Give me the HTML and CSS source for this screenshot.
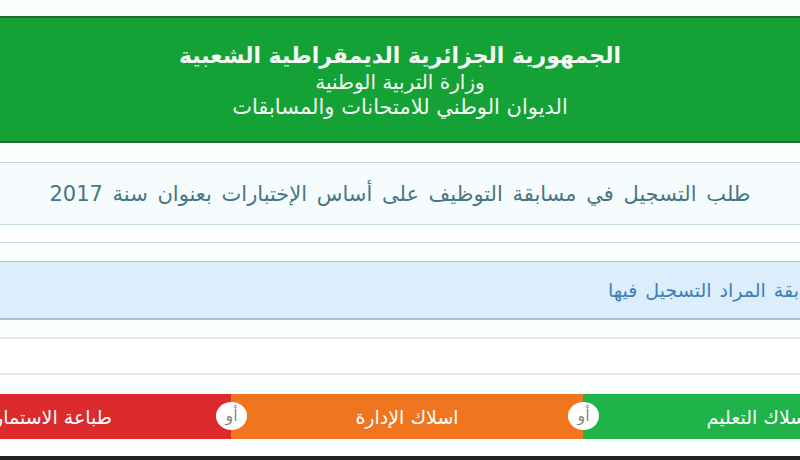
FILE: index.html
```html
<!DOCTYPE html>
<html lang="ar" dir="rtl">
<head>
  <meta charset="utf-8">
  <title>التسجيل في مسابقة التوظيف</title>
  <link rel="stylesheet" href="styles.css">
</head>
<body>
  <div class="page">
    <div class="banner">
      <h1>الجمهورية الجزائرية الديمقراطية الشعبية</h1>
      <p>وزارة التربية الوطنية</p>
      <p class="office">الديوان الوطني للامتحانات والمسابقات</p>
      <span class="dot">.</span>
    </div>

    <div class="panel-title">
      <h2>طلب التسجيل في مسابقة التوظيف على أساس الإختبارات بعنوان سنة 2017</h2>
    </div>
    <hr class="sep">

    <div class="notice">اختر المسابقة المراد التسجيل فيها</div>

    <div class="blank-row"></div>

    <div class="choices">
      <a class="choice choice-green" href="#">اسلاك التعليم</a>
      <a class="choice choice-orange" href="#"><span class="or">أو</span>اسلاك الإدارة</a>
      <a class="choice choice-red" href="#"><span class="or">أو</span>طباعة الاستمارة</a>
    </div>
  </div>
  <div class="footer-bar"></div>
</body>
</html>
```

FILE: styles.css
```css
html, body {
	margin: 0;
	padding: 0;
	overflow: hidden;
}
body {
	background-color: #fbfffe;
	font-family: "DejaVu Sans", sans-serif;
	height: 460px;
}
.page {
	width: 1070px;
	margin-right: -135px;
	padding-top: 16px;
}
.banner {
	background-color: #14a136;
	border-top: 2px solid #1d6b2c;
	border-bottom: 2px solid #1d6b2c;
	height: 123px;
	text-align: center;
	color: #f4fbf4;
}
.banner h1 {
	margin: 0;
	padding-top: 24px;
	font-size: 22px;
	line-height: 28px;
	font-weight: bold;
}
.banner p {
	margin: 0;
	font-size: 20px;
	line-height: 25px;
}
.banner .office {
	font-size: 21px;
}
.dot {
	display: block;
	font-size: 10px;
	line-height: 10px;
	color: #5a8a60;
}
.panel-title {
	margin-top: 19px;
	background-color: #f6fcfd;
	border-top: 1px solid #c6dcdf;
	border-bottom: 1px solid #c6dcdf;
	height: 61px;
	display: flex;
	align-items: center;
	justify-content: center;
}
.panel-title h2 {
	margin: 0;
	font-size: 21px;
	font-weight: normal;
	word-spacing: 3px;
	color: #467684;
}
.sep {
	margin: 17px 0 0;
	border: 0;
	border-top: 1px solid #c9dcdf;
	height: 0;
}
.notice {
	margin-top: 18px;
	background-color: #dceefb;
	border-top: 1px solid #adc3d5;
	border-bottom: 2px solid #a9c0d2;
	height: 56px;
	line-height: 56px;
	padding-right: 50px;
	font-size: 19px;
	word-spacing: 2px;
	color: #3e80b8;
}
.blank-row {
	margin-top: 17px;
	border-top: 2px solid #e5e5e5;
	border-bottom: 2px solid #e5e5e5;
	background-color: #fff;
	height: 34px;
}
.choices {
	margin-top: 19px;
	display: flex;
	height: 45px;
}
.choice {
	position: relative;
	display: flex;
	align-items: center;
	justify-content: center;
	width: 352px;
	color: #fff;
	font-size: 19px;
	text-decoration: none;
}
.choice-green {
	background-color: #20b34a;
}
.choice-orange {
	background-color: #f0751f;
}
.choice-red {
	background-color: #dd2a2c;
	width: 366px;
}
/* small "or" badge sitting on the seam between two buttons */
.or {
	position: absolute;
	right: -16px;
	top: 8px;
	width: 31px;
	height: 28px;
	border-radius: 50%;
	background-color: #fff;
	color: #8a8a8a;
	font-size: 16px;
	line-height: 28px;
	text-align: center;
	z-index: 1;
}
.footer-bar {
	position: absolute;
	left: 0;
	right: 0;
	top: 456px;
	height: 4px;
	background-color: #222;
}
```
